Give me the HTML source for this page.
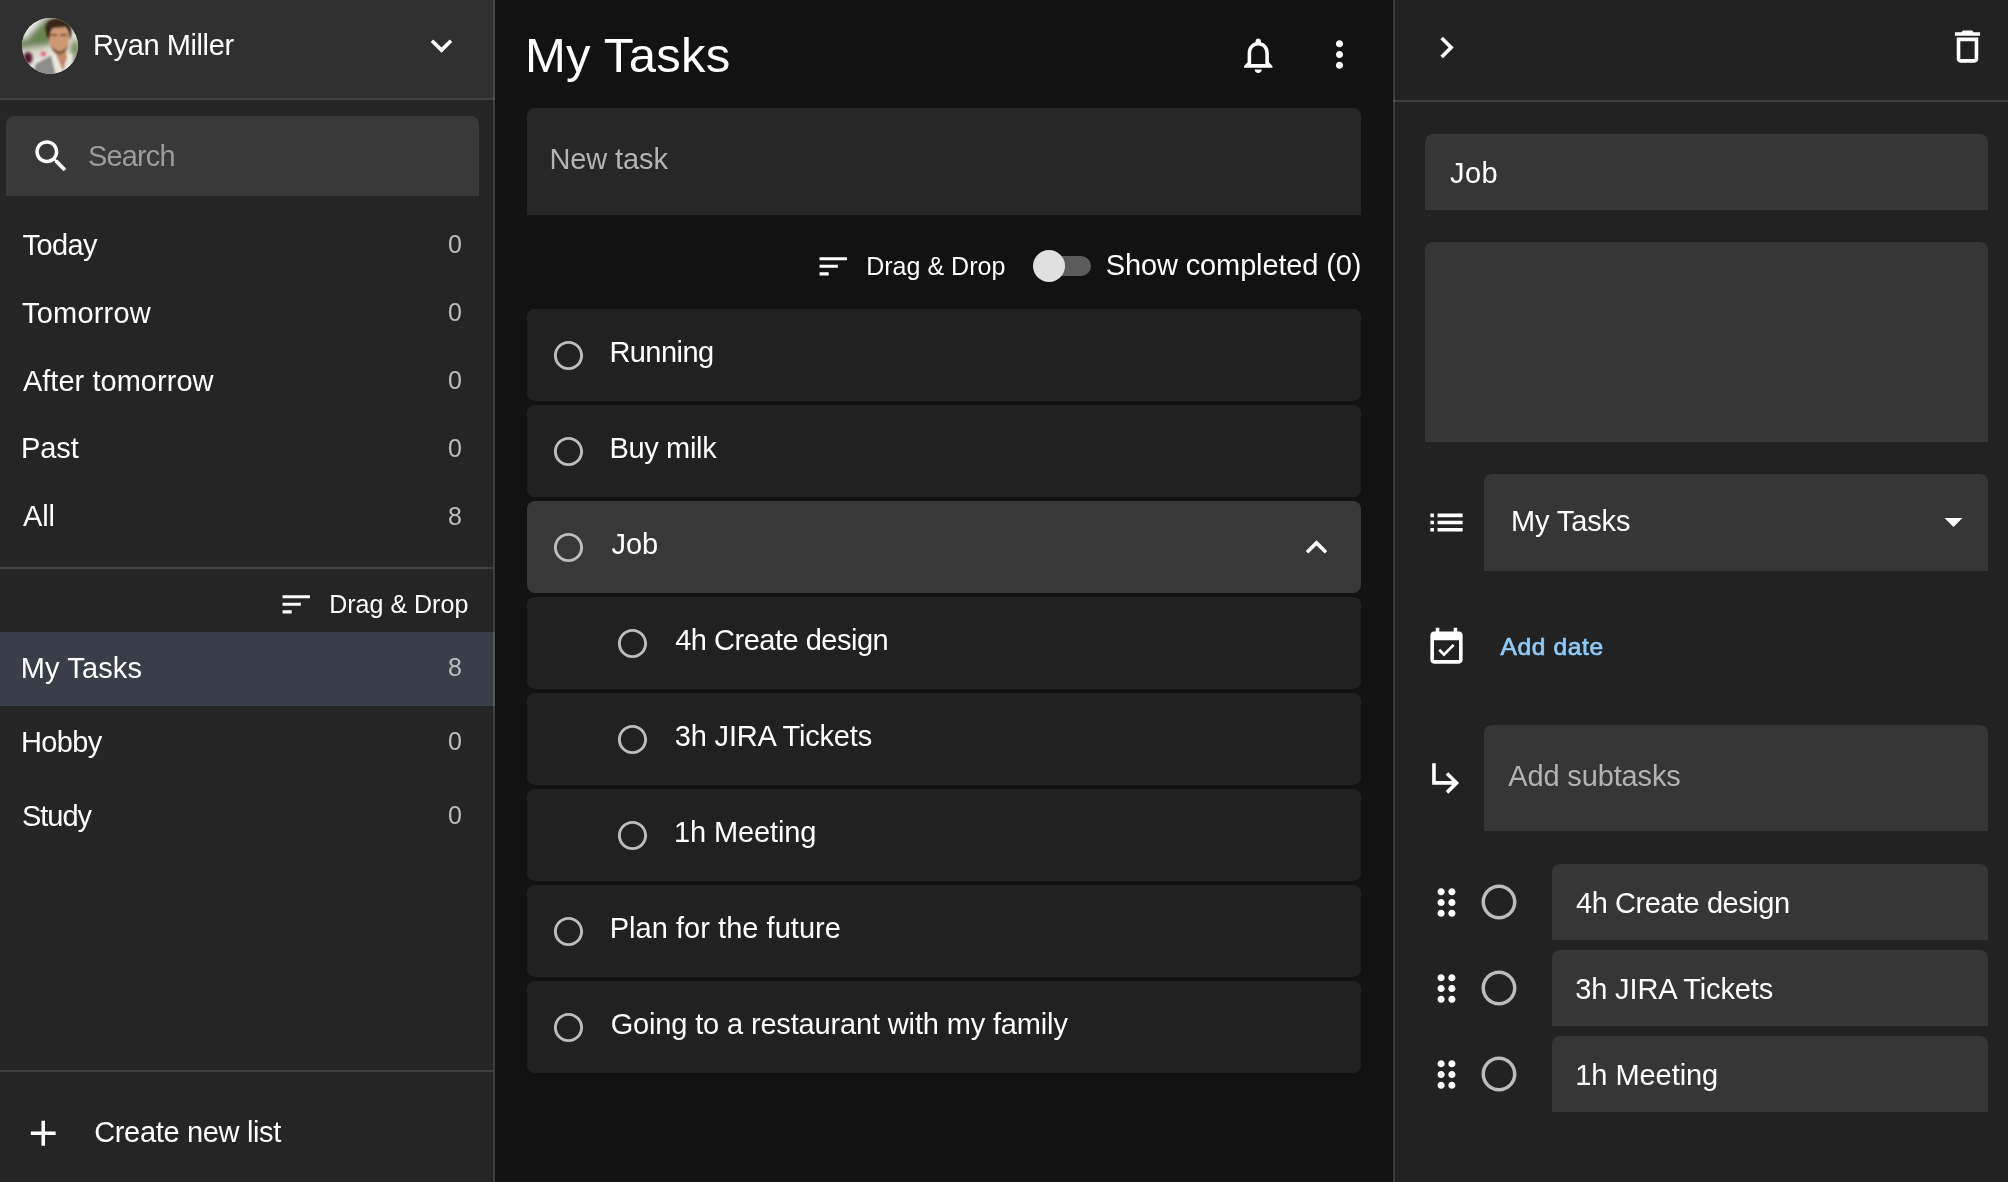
<!DOCTYPE html>
<html lang="en">
<head>
<meta charset="utf-8">
<title>My Tasks</title>
<style>
*{box-sizing:border-box;margin:0;padding:0}
html,body{width:2008px;height:1182px;overflow:hidden;background:#121212}
body{position:relative;font-family:"Liberation Sans",sans-serif;color:#fff;font-size:28px}
#root{position:absolute;left:0;top:0;width:2008px;height:1182px;will-change:transform}
.abs,.t,.box,svg.i{position:absolute}
.t{white-space:nowrap;line-height:1}
.cnt{color:#bdbdbd}
svg.i{fill:#fff}
#left{position:absolute;left:0;top:0;width:495px;height:1182px;background:#252525}
#lborder{position:absolute;left:493px;top:0;width:2px;height:1182px;background:rgba(255,255,255,.12);z-index:2}
#lhead{position:absolute;left:0;top:0;width:495px;height:98px;background:#303030}
.hline{position:absolute;height:2px;background:rgba(255,255,255,.12)}
#right{position:absolute;left:1393px;top:0;width:615px;height:1182px;background:#222}
#rborder{position:absolute;left:1393px;top:0;width:2px;height:1182px;background:rgba(255,255,255,.12)}
.card{position:absolute;left:527px;width:834px;height:92px;background:#212121;border-radius:8px}
.card.sel{background:#383838}
.field{position:absolute;background:#363636;border-radius:8px 8px 0 0}
</style>
</head>
<body>
<div id="root">

<!-- LEFT SIDEBAR -->
<div id="left"></div>
<div id="lhead"></div>
<div class="hline" style="left:0;top:98px;width:495px"></div>
<div id="lborder"></div>

<svg class="abs" style="left:22px;top:18px" width="56" height="56" viewBox="0 0 56 56">
<defs>
<clipPath id="avc"><circle cx="28" cy="28" r="28"/></clipPath>
<filter id="b1" x="-20%" y="-20%" width="140%" height="140%"><feGaussianBlur stdDeviation="0.8"/></filter>
<filter id="b3" x="-30%" y="-30%" width="160%" height="160%"><feGaussianBlur stdDeviation="3"/></filter>
<filter id="b2" x="-30%" y="-30%" width="160%" height="160%"><feGaussianBlur stdDeviation="1.6"/></filter>
</defs>
<g clip-path="url(#avc)">
<rect width="56" height="56" fill="#e4e2da"/>
<g filter="url(#b3)">
<path d="M-6 31 L-4 12 L24 -2 L34 4 L30 26 L10 31Z" fill="#67844f"/>
<path d="M-8 16 L12 -10 L30 -8 L2 22Z" fill="#f2f2ee"/>
<ellipse cx="53" cy="31" rx="4" ry="9" fill="#5d7c45"/>
<ellipse cx="14" cy="34" rx="12" ry="5" fill="#d9d6cc"/>
</g>
<g filter="url(#b2)">
<ellipse cx="6" cy="40" rx="4.500" ry="6" fill="#56162f"/>
<ellipse cx="21.500" cy="36" rx="2.600" ry="2.200" fill="#e24f6c"/>
</g>
<g filter="url(#b1)">
<path d="M10 58 L14 46 L30 37 L36 58Z" fill="#8d8e8a"/>
<path d="M49 40 L56 36 L58 48 L50 58Z" fill="#8f908c"/>
<path d="M29 37 L34 35 L50 36 L51 44 L44 56 L34 58Z" fill="#ebe6dc"/>
<path d="M33 34 L44 33 L45 40 L41 53 L38 46Z" fill="#c58a66"/>
<path d="M26.500 14 C26 8 32 7 39 8 C45 9 47.500 14 47 21 C46.500 30 43 36.500 37.500 36.500 C32 36.500 28 30 27 22Z" fill="#cf9874"/>
<path d="M29 27 C31 31 35 33 38 33 C41 33 44.500 30 46 26 C45.500 32 42 36.500 37.500 36.500 C33 36.500 30 32 29 27Z" fill="#7d5640"/>
<path d="M28.500 17.400 L35 17 M38.500 17.200 L44.500 16.800" stroke="#3a2417" stroke-width="1.400" fill="none"/>
<path d="M23.500 12 C22 4 30 -1 38 0.500 C45 1 50 6 49.500 14 C49.500 18 48.500 21 47.500 22 C47.500 16 46 11 43 9 C38 10 32 9 30 11 C28 14 27.500 18 27.500 22 C25 20 24 16 23.500 12Z" fill="#3b2617"/>
</g>
</g>
</svg>
<span class="t" id="t_user" style="left:93.00px;top:31px;font-size:29px;letter-spacing:-0.397px">Ryan Miller</span>
<svg class="i" style="left:420px;top:24.2px" width="43" height="43" viewBox="0 0 24 24"><path d="M16.59 8.59L12 13.17 7.41 8.59 6 10l6 6 6-6z"/></svg>
<div class="field" style="left:6px;top:116px;width:473px;height:80px;background:#393939"></div>
<svg class="i" style="left:29.7px;top:134.5px" width="42.5" height="42.5" viewBox="0 0 24 24"><path d="M15.5 14h-.79l-.28-.27C15.41 12.59 16 11.11 16 9.5 16 5.91 13.09 3 9.5 3S3 5.91 3 9.5 5.91 16 9.5 16c1.61 0 3.09-.59 4.23-1.57l.27.28v.79l5 4.99L20.49 19l-4.99-5zm-6 0C7.01 14 5 11.99 5 9.5S7.01 5 9.5 5 14 7.01 14 9.5 11.99 14 9.5 14z"/></svg>
<span class="t" id="t_search" style="left:88.00px;top:142px;font-size:29px;letter-spacing:-0.851px;color:#9c9c9c">Search</span>
<span class="t" id="t_today" style="left:22.50px;top:231px;font-size:29px;letter-spacing:-0.571px">Today</span><span class="t cnt" id="c1" style="left:448.00px;top:232px;font-size:25px;letter-spacing:0.000px">0</span>
<span class="t" id="t_tomorrow" style="left:22.00px;top:299px;font-size:29px;letter-spacing:0.206px">Tomorrow</span><span class="t cnt" id="c2" style="left:448.00px;top:300px;font-size:25px;letter-spacing:0.000px">0</span>
<span class="t" id="t_after" style="left:22.90px;top:367px;font-size:29px;letter-spacing:0.037px">After tomorrow</span><span class="t cnt" id="c3" style="left:448.00px;top:368px;font-size:25px;letter-spacing:0.000px">0</span>
<span class="t" id="t_past" style="left:21.00px;top:434px;font-size:29px;letter-spacing:-0.090px">Past</span><span class="t cnt" id="c4" style="left:448.00px;top:436px;font-size:25px;letter-spacing:0.000px">0</span>
<span class="t" id="t_all" style="left:22.90px;top:502px;font-size:29px;letter-spacing:-0.093px">All</span><span class="t cnt" id="c5" style="left:448.00px;top:504px;font-size:25px;letter-spacing:0.000px">8</span>
<div class="hline" style="left:0;top:567px;width:493px"></div>
<svg class="i" style="left:277.5px;top:585.6px" width="36.5" height="36.5" viewBox="0 0 24 24"><path d="M3 18h6v-2H3v2zM3 6v2h18V6H3zm0 7h12v-2H3v2z"/></svg>
<span class="t" id="t_dd1" style="left:329.20px;top:592px;font-size:25px;letter-spacing:0.016px">Drag &amp; Drop</span>
<div class="abs" style="left:0;top:632px;width:495px;height:74px;background:#383f48"></div>
<span class="t" id="t_mytasks" style="left:20.80px;top:654px;font-size:29px;letter-spacing:0.122px">My Tasks</span><span class="t cnt" id="c6" style="left:448.00px;top:655px;font-size:25px;letter-spacing:0.000px">8</span>
<span class="t" id="t_hobby" style="left:21.00px;top:728px;font-size:29px;letter-spacing:-0.632px">Hobby</span><span class="t cnt" id="c7" style="left:448.00px;top:729px;font-size:25px;letter-spacing:0.000px">0</span>
<span class="t" id="t_study" style="left:22.00px;top:802px;font-size:29px;letter-spacing:-1.014px">Study</span><span class="t cnt" id="c8" style="left:448.00px;top:803px;font-size:25px;letter-spacing:0.000px">0</span>
<div class="hline" style="left:0;top:1070px;width:493px"></div>
<svg class="i" style="left:21.85px;top:1111.75px" width="42.5" height="42.5" viewBox="0 0 24 24"><path d="M19 13h-6v6h-2v-6H5v-2h6V5h2v6h6v2z"/></svg>
<span class="t" id="t_create" style="left:94.20px;top:1118px;font-size:29px;letter-spacing:-0.332px">Create new list</span>

<!-- CENTER -->
<span class="t" id="t_title" style="left:524.90px;top:31px;font-size:49px;letter-spacing:0.302px;color:#fff">My Tasks</span>
<svg class="i" style="left:1236.75px;top:33.6px" width="42.5" height="42.5" viewBox="0 0 24 24"><path d="M12 22c1.1 0 2-.9 2-2h-4c0 1.1.9 2 2 2zm6-6v-5c0-3.07-1.63-5.64-4.5-6.32V4c0-.83-.67-1.5-1.5-1.5s-1.5.67-1.5 1.5v.68C7.64 5.36 6 7.92 6 11v5l-2 2v1h16v-1l-2-2zm-2 1H8v-6c0-2.48 1.51-4.5 4-4.5s4 2.02 4 4.5v6z"/></svg>
<svg class="i" style="left:1318.1px;top:33.1px" width="43" height="43" viewBox="0 0 24 24"><path d="M12 8c1.1 0 2-.9 2-2s-.9-2-2-2-2 .9-2 2 .9 2 2 2zm0 2c-1.1 0-2 .9-2 2s.9 2 2 2 2-.9 2-2-.9-2-2-2zm0 6c-1.1 0-2 .9-2 2s.9 2 2 2 2-.9 2-2-.9-2-2-2z"/></svg>
<div class="field" style="left:527px;top:108px;width:834px;height:107px;background:#272727"></div>
<span class="t" id="t_newtask" style="left:549.40px;top:145px;font-size:29px;letter-spacing:-0.108px;color:#b3b3b3">New task</span>
<svg class="i" style="left:814.6px;top:247.5px" width="36.5" height="36.5" viewBox="0 0 24 24"><path d="M3 18h6v-2H3v2zM3 6v2h18V6H3zm0 7h12v-2H3v2z"/></svg>
<span class="t" id="t_dd2" style="left:866.20px;top:254px;font-size:25px;letter-spacing:0.026px">Drag &amp; Drop</span>
<div class="abs" style="left:1039px;top:256px;width:52px;height:20px;border-radius:10px;background:#5c5c5c"></div>
<div class="abs" style="left:1033px;top:250px;width:32px;height:32px;border-radius:50%;background:#e0e0e0"></div>
<span class="t" id="t_show" style="left:1105.80px;top:251px;font-size:29px;letter-spacing:-0.132px">Show completed (0)</span>
<div class="card" style="top:309px"></div>
<svg class="i" style="left:551.0px;top:337.5px;fill:#bcbcbc" width="35" height="35" viewBox="0 0 24 24"><path d="M12 2C6.48 2 2 6.48 2 12s4.48 10 10 10 10-4.480 10-10S17.52 2 12 2zm0 18c-4.42 0-8-3.580-8-8s3.580-8 8-8 8 3.580 8 8-3.580 8-8 8z"/></svg>
<span class="t" id="t_running" style="left:609.40px;top:338px;font-size:29px;letter-spacing:-0.550px">Running</span>
<div class="card" style="top:405px"></div>
<svg class="i" style="left:551.0px;top:433.5px;fill:#bcbcbc" width="35" height="35" viewBox="0 0 24 24"><path d="M12 2C6.48 2 2 6.48 2 12s4.48 10 10 10 10-4.480 10-10S17.52 2 12 2zm0 18c-4.42 0-8-3.580-8-8s3.580-8 8-8 8 3.580 8 8-3.580 8-8 8z"/></svg>
<span class="t" id="t_buymilk" style="left:609.40px;top:434px;font-size:29px;letter-spacing:-0.324px">Buy milk</span>
<div class="card sel" style="top:501px"></div>
<svg class="i" style="left:551.0px;top:529.5px;fill:#bcbcbc" width="35" height="35" viewBox="0 0 24 24"><path d="M12 2C6.48 2 2 6.48 2 12s4.48 10 10 10 10-4.480 10-10S17.52 2 12 2zm0 18c-4.42 0-8-3.580-8-8s3.580-8 8-8 8 3.580 8 8-3.580 8-8 8z"/></svg>
<span class="t" id="t_job" style="left:611.40px;top:530px;font-size:29px;letter-spacing:-0.014px">Job</span>
<svg class="i" style="left:1294.5px;top:525.5px" width="43" height="43" viewBox="0 0 24 24"><path d="M12 8l-6 6 1.41 1.41L12 10.83l4.59 4.58L18 14z"/></svg>
<div class="card" style="top:597px"></div>
<svg class="i" style="left:615.1px;top:625.5px;fill:#bcbcbc" width="35" height="35" viewBox="0 0 24 24"><path d="M12 2C6.48 2 2 6.48 2 12s4.48 10 10 10 10-4.480 10-10S17.52 2 12 2zm0 18c-4.42 0-8-3.580-8-8s3.580-8 8-8 8 3.580 8 8-3.580 8-8 8z"/></svg>
<span class="t" id="t_s1" style="left:675.20px;top:626px;font-size:29px;letter-spacing:-0.489px">4h Create design</span>
<div class="card" style="top:693px"></div>
<svg class="i" style="left:615.1px;top:721.5px;fill:#bcbcbc" width="35" height="35" viewBox="0 0 24 24"><path d="M12 2C6.48 2 2 6.48 2 12s4.48 10 10 10 10-4.480 10-10S17.52 2 12 2zm0 18c-4.42 0-8-3.580-8-8s3.580-8 8-8 8 3.580 8 8-3.580 8-8 8z"/></svg>
<span class="t" id="t_s2" style="left:674.80px;top:722px;font-size:29px;letter-spacing:-0.177px">3h JIRA Tickets</span>
<div class="card" style="top:789px"></div>
<svg class="i" style="left:615.1px;top:817.5px;fill:#bcbcbc" width="35" height="35" viewBox="0 0 24 24"><path d="M12 2C6.48 2 2 6.48 2 12s4.48 10 10 10 10-4.480 10-10S17.52 2 12 2zm0 18c-4.42 0-8-3.580-8-8s3.580-8 8-8 8 3.580 8 8-3.580 8-8 8z"/></svg>
<span class="t" id="t_s3" style="left:673.90px;top:818px;font-size:29px;letter-spacing:-0.106px">1h Meeting</span>
<div class="card" style="top:885px"></div>
<svg class="i" style="left:551.0px;top:913.5px;fill:#bcbcbc" width="35" height="35" viewBox="0 0 24 24"><path d="M12 2C6.48 2 2 6.48 2 12s4.48 10 10 10 10-4.480 10-10S17.52 2 12 2zm0 18c-4.42 0-8-3.580-8-8s3.580-8 8-8 8 3.580 8 8-3.580 8-8 8z"/></svg>
<span class="t" id="t_plan" style="left:609.70px;top:914px;font-size:29px;letter-spacing:0.039px">Plan for the future</span>
<div class="card" style="top:981px"></div>
<svg class="i" style="left:551.0px;top:1009.5px;fill:#bcbcbc" width="35" height="35" viewBox="0 0 24 24"><path d="M12 2C6.48 2 2 6.48 2 12s4.48 10 10 10 10-4.480 10-10S17.52 2 12 2zm0 18c-4.42 0-8-3.580-8-8s3.580-8 8-8 8 3.580 8 8-3.580 8-8 8z"/></svg>
<span class="t" id="t_going" style="left:610.70px;top:1010px;font-size:29px;letter-spacing:-0.153px">Going to a restaurant with my family</span>

<!-- RIGHT PANEL -->
<div id="right"></div>
<div id="rborder"></div>
<div class="hline" style="left:1393px;top:100px;width:615px"></div>
<svg class="i" style="left:1425.1px;top:25.5px" width="43" height="43" viewBox="0 0 24 24"><path d="M10 6L8.59 7.41 13.17 12l-4.58 4.59L10 18l6-6z"/></svg>
<svg class="i" style="left:1945.6px;top:25.4px" width="43" height="43" viewBox="0 0 24 24"><path d="M6 19c0 1.1.9 2 2 2h8c1.1 0 2-.9 2-2V7H6v12zM8 9h8v10H8V9zm7.5-5l-1-1h-5l-1 1H5v2h14V4z"/></svg>
<div class="field" style="left:1425px;top:134px;width:563px;height:76px"></div>
<span class="t" id="t_rjob" style="left:1450.00px;top:159px;font-size:29px;letter-spacing:0.386px">Job</span>
<div class="field" style="left:1425px;top:242px;width:563px;height:200px"></div>
<svg class="i" style="left:1425px;top:500.5px" width="43" height="43" viewBox="0 0 24 24"><path d="M3 13h2v-2H3v2zm0 4h2v-2H3v2zm0-8h2V7H3v2zm4 4h14v-2H7v2zm0 4h14v-2H7v2zM7 7v2h14V7H7z"/></svg>
<div class="field" style="left:1484px;top:474px;width:504px;height:97px"></div>
<span class="t" id="t_rmytasks" style="left:1511.00px;top:507px;font-size:29px;letter-spacing:-0.120px">My Tasks</span>
<svg class="i" style="left:1931.5px;top:500.1px" width="43" height="43" viewBox="0 0 24 24"><path d="M7 10l5 5 5-5z"/></svg>
<svg class="i" style="left:1425.15px;top:626px" width="43" height="43" viewBox="0 0 24 24"><path d="M16.53 11.06L15.47 10l-4.88 4.88-2.12-2.12-1.06 1.06L10.59 17l5.94-5.94zM19 3h-1V1h-2v2H8V1H6v2H5c-1.11 0-1.99.9-1.99 2L3 19c0 1.1.89 2 2 2h14c1.1 0 2-.9 2-2V5c0-1.1-.9-2-2-2zm0 16H5V8h14v11z"/></svg>
<span class="t" id="t_adddate" style="left:1500.60px;top:635px;font-size:24.5px;letter-spacing:0.620px;color:#90caf9;-webkit-text-stroke:0.7px #90caf9">Add date</span>
<svg class="i" style="left:1424.75px;top:756.15px" width="43" height="43" viewBox="0 0 24 24"><path d="M19 15l-6 6-1.42-1.42L15.17 16H4V4h2v10h9.17l-3.59-3.58L13 9l6 6z"/></svg>
<div class="field" style="left:1484px;top:725px;width:504px;height:106px"></div>
<span class="t" id="t_addsub" style="left:1508.20px;top:762px;font-size:29px;letter-spacing:-0.136px;color:#b3b3b3">Add subtasks</span>
<svg class="i" style="left:1425.15px;top:880.55px" width="43" height="43" viewBox="0 0 24 24"><path d="M11 18c0 1.1-.9 2-2 2s-2-.9-2-2 .9-2 2-2 2 .9 2 2zm-2-8c-1.1 0-2 .9-2 2s.9 2 2 2 2-.9 2-2-.9-2-2-2zm0-6c-1.1 0-2 .9-2 2s.9 2 2 2 2-.9 2-2-.9-2-2-2zm6 4c1.1 0 2-.9 2-2s-.9-2-2-2-2 .9-2 2 .9 2 2 2zm0 2c-1.1 0-2 .9-2 2s.9 2 2 2 2-.9 2-2-.9-2-2-2zm0 6c-1.1 0-2 .9-2 2s.9 2 2 2 2-.9 2-2-.9-2-2-2z"/></svg>
<svg class="i" style="left:1477.8px;top:881px;fill:#bcbcbc" width="42" height="42" viewBox="0 0 24 24"><path d="M12 2C6.48 2 2 6.48 2 12s4.48 10 10 10 10-4.480 10-10S17.52 2 12 2zm0 18c-4.42 0-8-3.580-8-8s3.580-8 8-8 8 3.580 8 8-3.580 8-8 8z"/></svg>
<div class="field" style="left:1552px;top:864px;width:436px;height:76px"></div>
<span class="t" id="t_r1" style="left:1576.10px;top:889px;font-size:29px;letter-spacing:-0.463px">4h Create design</span>
<svg class="i" style="left:1425.15px;top:966.55px" width="43" height="43" viewBox="0 0 24 24"><path d="M11 18c0 1.1-.9 2-2 2s-2-.9-2-2 .9-2 2-2 2 .9 2 2zm-2-8c-1.1 0-2 .9-2 2s.9 2 2 2 2-.9 2-2-.9-2-2-2zm0-6c-1.1 0-2 .9-2 2s.9 2 2 2 2-.9 2-2-.9-2-2-2zm6 4c1.1 0 2-.9 2-2s-.9-2-2-2-2 .9-2 2 .9 2 2 2zm0 2c-1.1 0-2 .9-2 2s.9 2 2 2 2-.9 2-2-.9-2-2-2zm0 6c-1.1 0-2 .9-2 2s.9 2 2 2 2-.9 2-2-.9-2-2-2z"/></svg>
<svg class="i" style="left:1477.8px;top:967px;fill:#bcbcbc" width="42" height="42" viewBox="0 0 24 24"><path d="M12 2C6.48 2 2 6.48 2 12s4.48 10 10 10 10-4.480 10-10S17.52 2 12 2zm0 18c-4.42 0-8-3.580-8-8s3.580-8 8-8 8 3.580 8 8-3.580 8-8 8z"/></svg>
<div class="field" style="left:1552px;top:950px;width:436px;height:76px"></div>
<span class="t" id="t_r2" style="left:1575.20px;top:975px;font-size:29px;letter-spacing:-0.134px">3h JIRA Tickets</span>
<svg class="i" style="left:1425.15px;top:1052.55px" width="43" height="43" viewBox="0 0 24 24"><path d="M11 18c0 1.1-.9 2-2 2s-2-.9-2-2 .9-2 2-2 2 .9 2 2zm-2-8c-1.1 0-2 .9-2 2s.9 2 2 2 2-.9 2-2-.9-2-2-2zm0-6c-1.1 0-2 .9-2 2s.9 2 2 2 2-.9 2-2-.9-2-2-2zm6 4c1.1 0 2-.9 2-2s-.9-2-2-2-2 .9-2 2 .9 2 2 2zm0 2c-1.1 0-2 .9-2 2s.9 2 2 2 2-.9 2-2-.9-2-2-2zm0 6c-1.1 0-2 .9-2 2s.9 2 2 2 2-.9 2-2-.9-2-2-2z"/></svg>
<svg class="i" style="left:1477.8px;top:1053px;fill:#bcbcbc" width="42" height="42" viewBox="0 0 24 24"><path d="M12 2C6.48 2 2 6.48 2 12s4.48 10 10 10 10-4.480 10-10S17.52 2 12 2zm0 18c-4.42 0-8-3.580-8-8s3.580-8 8-8 8 3.580 8 8-3.580 8-8 8z"/></svg>
<div class="field" style="left:1552px;top:1036px;width:436px;height:76px"></div>
<span class="t" id="t_r3" style="left:1575.30px;top:1061px;font-size:29px;letter-spacing:-0.062px">1h Meeting</span>
</div>
</body>
</html>
